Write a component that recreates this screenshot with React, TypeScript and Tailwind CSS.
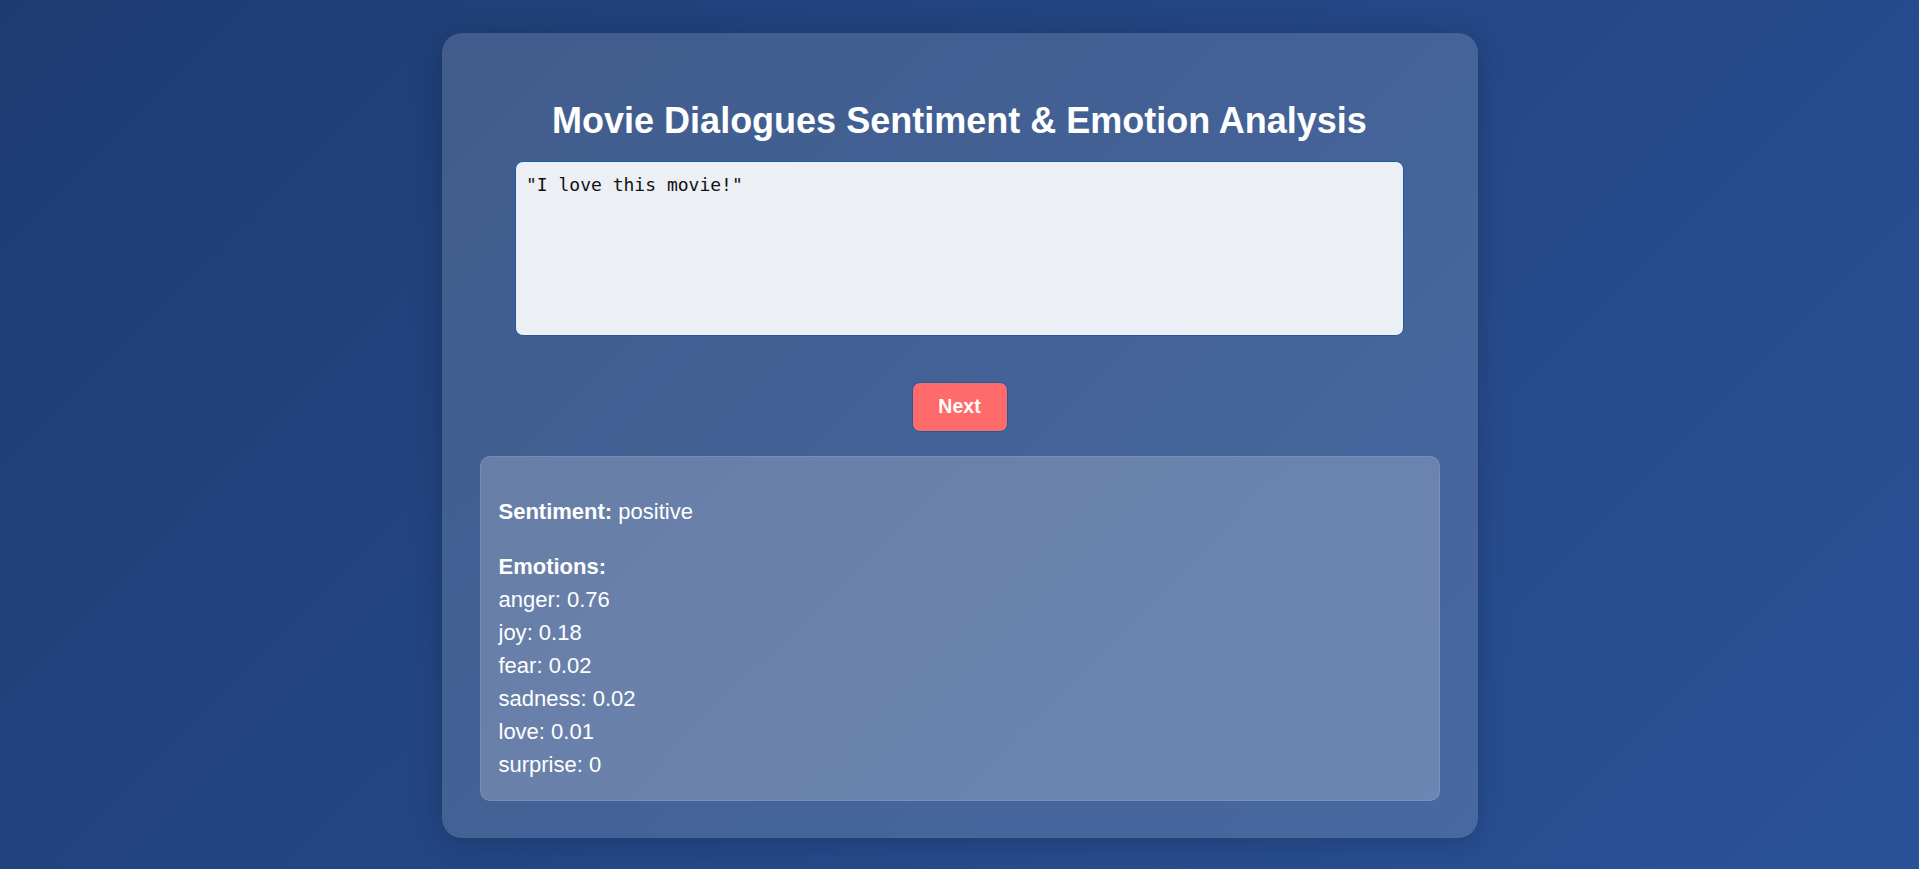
import React from "react";

export default function App() {
  const emotions: [string, string][] = [
    ["anger", "0.76"],
    ["joy", "0.18"],
    ["fear", "0.02"],
    ["sadness", "0.02"],
    ["love", "0.01"],
    ["surprise", "0"],
  ];
  return (
    <div
      className="min-h-[869px] w-full flex justify-center pt-[33px] pb-[31px] bg-[linear-gradient(135deg,#1e3c72,#2a5298)]"
      style={{ fontFamily: '"Liberation Sans", Arial, sans-serif' }}
    >
      <div className="w-[1036px] rounded-[20px] bg-white/15 shadow-[0_4px_30px_rgba(0,0,0,0.2)] px-[38px] pt-[67px] pb-[37px] flex flex-col">
        <h1 className="text-[36px] leading-[41px] font-bold text-white text-center">
          Movie Dialogues Sentiment &amp; Emotion Analysis
        </h1>
        <textarea
          className="mt-[20px] mx-auto block w-[889px] h-[175px] rounded-[8px] border border-[#1e5aa0] bg-white/90 text-[#111] px-[10px] pt-[12px] text-[18px] leading-[22px] resize-none outline-none"
          style={{ fontFamily: '"DejaVu Sans Mono", monospace' }}
          defaultValue={'"I love this movie!"'}
        />
        <button className="mt-[46px] mx-auto w-[96px] h-[50px] rounded-[8px] border border-[#1e5aa0] bg-[#ff6b6b] text-white font-bold text-[19.5px] leading-none">
          Next
        </button>
        <div className="mt-[24px] w-[960px] h-[345px] rounded-[10px] border border-white/10 bg-white/20 text-white text-[22px] leading-[33px] pt-[38px] px-[18px] pb-[20px]">
          <p className="mb-[22px]">
            <span className="font-bold">Sentiment:</span> positive
          </p>
          <p className="font-bold">Emotions:</p>
          {emotions.map(([k, v]) => (
            <p key={k}>
              {k}: {v}
            </p>
          ))}
        </div>
      </div>
    </div>
  );
}
